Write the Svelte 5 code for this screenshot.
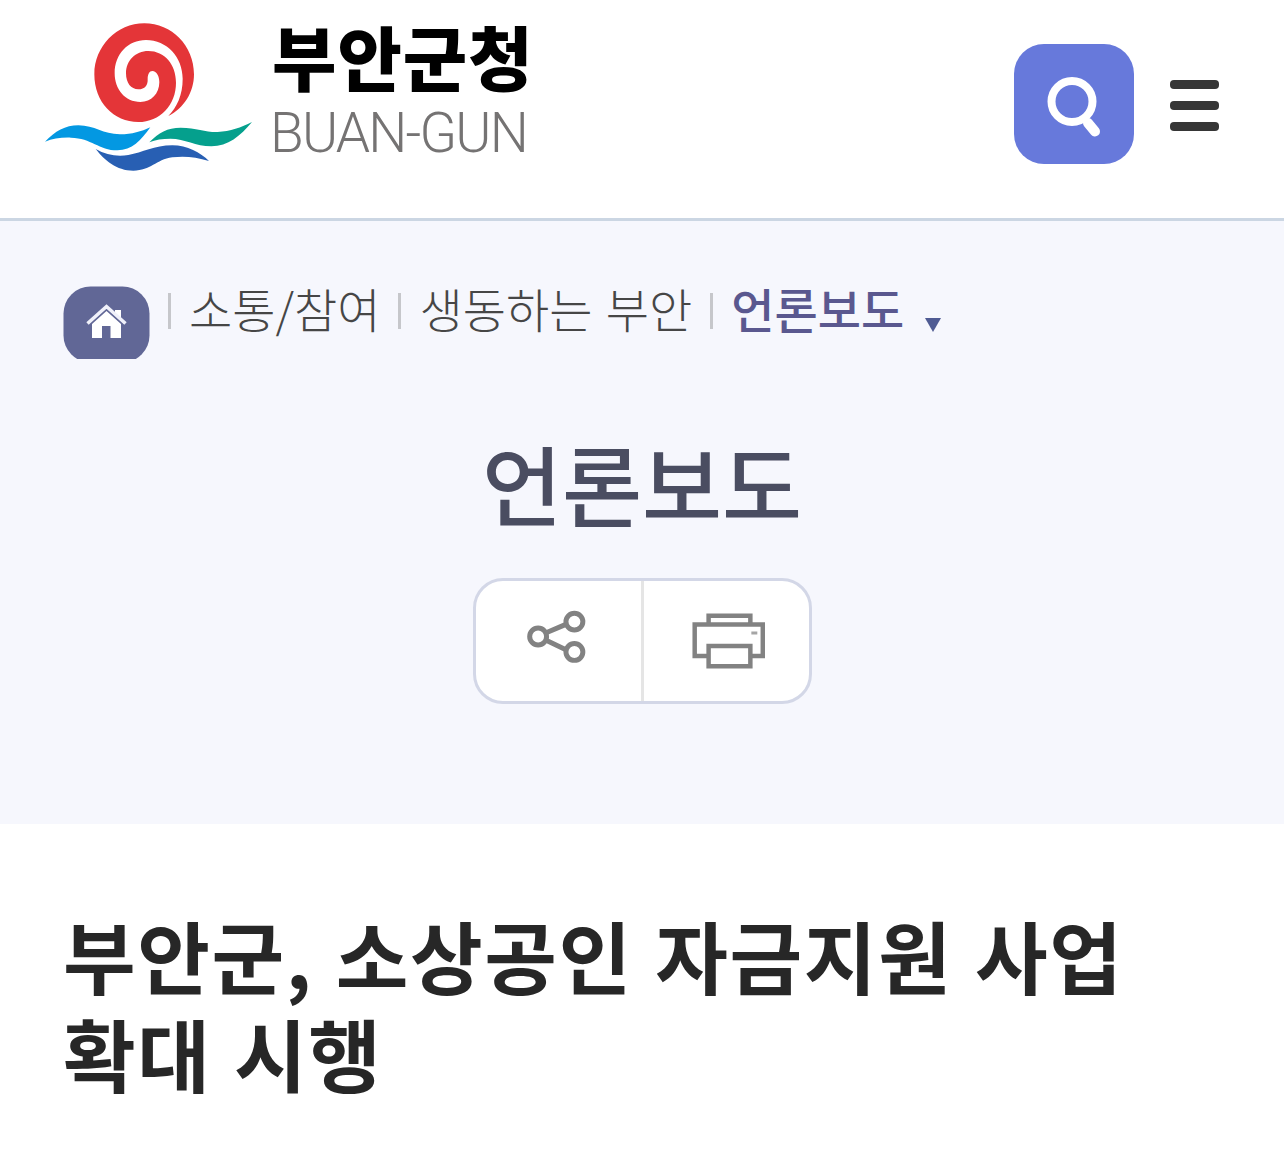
<script lang="ts">
	const crumbs = [
		{ label: '소통/참여', current: false },
		{ label: '생동하는 부안', current: false },
		{ label: '언론보도', current: true }
	];
	const pageTitle = '언론보도';
	const headline = ['부안군, 소상공인 자금지원 사업', '확대 시행'];
</script>

<header class="header">
	<a class="logo" href="#home" aria-label="부안군청">
		<svg class="emblem" viewBox="45 36 621 450" aria-hidden="true">
			<path
				fill="#e43538"
				d="M415 318C462 295 492 247 492 193C492 107 425 40 343 40C260 40 193 110 193 193C193 277 251 336 325 336C390 336 438 285 438 218C438 164 404 123 355 123C316 123 288 152 288 190C288 219 303 238 325 238C345 238 354 226 353 207C353 193 358 183 367 183C380 183 388 199 388 217C388 251 364 276 331 276C285 276 254 238 254 190C254 132 294 90 348 90C411 90 458 142 458 206C458 255 441 291 415 318Z"
			/>
			<path
				fill="#0398e2"
				d="M45 395C75 364 106 346 145 346C195 346 218 373 270 373C307 373 333 365 361 352C333 391 306 421 262 421C207 421 184 384 123 383C93 382 68 386 45 395Z"
			/>
			<path
				fill="#05a08d"
				d="M358 397C386 368 412 353 452 353C501 353 526 367 563 366C601 364 633 353 666 336C631 378 594 409 544 409C496 409 466 386 421 386C397 386 376 389 358 397Z"
			/>
			<path
				fill="#285fb3"
				d="M197 417C228 435 262 441 295 435C338 428 372 406 427 406C472 406 511 428 537 453C498 441 463 437 427 442C377 449 363 482 310 482C259 482 224 451 197 417Z"
			/>
		</svg>
		<span class="logo-text">
			<strong class="logo-ko">부안군청</strong>
			<span class="logo-en">BUAN-GUN</span>
		</span>
	</a>

	<div class="actions">
		<button class="search" type="button" aria-label="검색">
			<svg viewBox="0 0 120 120" aria-hidden="true">
				<circle cx="58" cy="57.500" r="20.500" />
				<path class="handle" d="M74 79L81 87.500" />
			</svg>
		</button>
		<button class="menu" type="button" aria-label="메뉴">
			<span></span>
			<span></span>
			<span></span>
		</button>
	</div>
</header>

<section class="visual">
	<nav class="crumbs">
		<a class="home" href="#home" aria-label="홈">
			<svg viewBox="0 0 87 74" aria-hidden="true">
				<rect class="box" x="0.500" y="1.500" width="86" height="76" rx="27" />
				<path class="walls" d="M29 39L43.500 26L58 39V53H47.500V41H39V53H29ZM52 25H58V36L52 30Z" />
				<path class="roof" d="M24.500 38.500L43.500 21.500L62.500 38.500" />
			</svg>
		</a>
		{#each crumbs as crumb}
			<span class="bar"></span>
			<a class="crumb" class:current={crumb.current} href="#list">{crumb.label}</a>
		{/each}
		<svg class="arrow" viewBox="0 0 18 16" aria-hidden="true">
			<path d="M1 1H17L9 15Z" />
		</svg>
	</nav>

	<h1 class="title">{pageTitle}</h1>

	<div class="tools">
		<button type="button" aria-label="공유">
			<svg viewBox="0 0 166 120" aria-hidden="true">
				<path d="M70 52L91 43M70 59L91 69" />
				<circle cx="62.500" cy="55.500" r="8.500" />
				<circle cx="99" cy="40.500" r="8.500" />
				<circle cx="99" cy="71" r="8.500" />
			</svg>
		</button>
		<button type="button" aria-label="인쇄">
			<svg class="print" viewBox="0 0 166 120" aria-hidden="true">
				<path d="M65 43V34.500H107V43M65 75H51V43.500H119.500V75H107" />
				<path d="M65 65H107V85.500H65Z" />
				<path class="dot" d="M108 52H114" />
			</svg>
		</button>
	</div>
</section>

<main class="article">
	<h2>
		{#each headline as line}
			<span>{line}</span>
		{/each}
	</h2>
</main>

<style>
	:global(body) {
		margin: 0;
		background: #fff;
		font-family: 'Noto Sans CJK KR', sans-serif;
	}

	a {
		color: inherit;
		text-decoration: none;
	}

	button {
		padding: 0;
		border: 0;
		background: none;
	}

	svg {
		display: block;
	}

	.header {
		box-sizing: border-box;
		height: 221px;
		padding: 22px 65px 0 45px;
		border-bottom: 3px solid #cbd6e3;
		display: flex;
		justify-content: space-between;
		align-items: flex-start;
	}

	.logo {
		display: flex;
		gap: 20px;
	}

	.emblem {
		width: 207px;
		height: 150px;
	}

	.logo-text {
		display: flex;
		flex-direction: column;
		white-space: nowrap;
	}

	.logo-ko {
		height: 76px;
		font-size: 70px;
		font-weight: 900;
		line-height: 67px;
		letter-spacing: 1px;
		color: #000;
	}

	.logo-en {
		margin-left: -2px;
		font-family: Roboto, sans-serif;
		font-size: 55px;
		font-weight: 300;
		line-height: 70px;
		letter-spacing: -1.8px;
		color: #757373;
	}

	.actions {
		display: flex;
		align-items: center;
		gap: 36px;
		padding-top: 22px;
	}

	.search {
		width: 120px;
		height: 120px;
		border-radius: 30px;
		background: #6779db;
	}

	.search svg {
		fill: none;
		stroke: #fff;
		stroke-width: 8;
		stroke-linecap: round;
	}

	.search .handle {
		stroke-width: 10;
	}

	.menu {
		width: 49px;
		display: flex;
		flex-direction: column;
		gap: 12px;
		padding-top: 2px;
	}

	.menu span {
		height: 9px;
		border-radius: 4px;
		background: #363636;
	}

	.visual {
		box-sizing: border-box;
		height: 603px;
		padding: 64px 63px 0;
		background: #f6f7fd;
		display: flex;
		flex-direction: column;
		align-items: center;
	}

	.crumbs {
		align-self: stretch;
		height: 74px;
		display: flex;
		white-space: nowrap;
	}

	.home svg {
		width: 87px;
		height: 74px;
	}

	.box {
		fill: #616796;
	}

	.walls {
		fill: #fff;
	}

	.roof {
		fill: none;
		stroke: #f0f1fa;
		stroke-width: 3.5;
	}

	.bar {
		width: 3px;
		height: 36px;
		margin: 8px 18px 0;
		background: #c6c7cb;
	}

	.crumb {
		height: 54px;
		font-size: 47px;
		font-weight: 300;
		line-height: 46px;
		word-spacing: 3px;
		color: #464646;
	}

	.current {
		font-weight: 500;
		color: #5a588f;
	}

	.arrow {
		width: 18px;
		height: 16px;
		margin: 32px 0 0 20px;
		fill: #4f5b93;
	}

	.title {
		margin: 68px 0 0;
		font-size: 87px;
		font-weight: 500;
		line-height: 110px;
		color: #4a4d61;
	}

	.tools {
		box-sizing: border-box;
		width: 339px;
		height: 126px;
		margin-top: 41px;
		border: 3px solid #d3d7e7;
		border-radius: 30px;
		background: #fff;
		display: flex;
		overflow: hidden;
	}

	.tools button {
		flex: 1;
	}

	.tools button + button {
		border-left: 3px solid #e5e5e5;
	}

	.tools svg {
		width: 165px;
		height: 120px;
		fill: none;
		stroke: #828282;
		stroke-width: 5;
	}

	.tools .print {
		stroke-width: 4.5;
	}

	.tools .dot {
		stroke: #a5a5a5;
		stroke-width: 3;
	}

	.article {
		padding: 82px 63px 0;
	}

	h2 {
		margin: 0;
		font-size: 79px;
		font-weight: 700;
		line-height: 98px;
		letter-spacing: 1.6px;
		word-spacing: 3px;
		color: #272727;
	}

	h2 span {
		display: block;
		white-space: nowrap;
	}
</style>
